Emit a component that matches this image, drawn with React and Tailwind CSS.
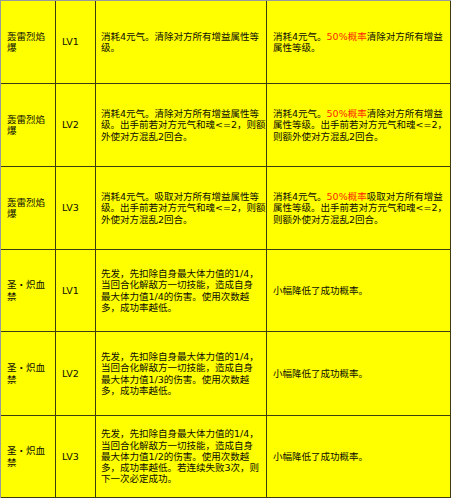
import React from "react";

const R = ({ children }) => <span className="text-[#ff2a00]">{children}</span>;

const rows = [
  {
    h: "h-[83px]",
    name: ["轰雷烈焰", "爆"],
    lv: "LV1",
    desc: ["消耗4元气。清除对方所有增益属性等", "级。"],
    eff: [<>消耗4元气。<R>50%概率</R>清除对方所有增益</>, "属性等级。"],
  },
  {
    h: "h-[83px]",
    name: ["轰雷烈焰", "爆"],
    lv: "LV2",
    desc: ["消耗4元气。清除对方所有增益属性等", "级。出手前若对方元气和魂<=2，则额", "外使对方混乱2回合。"],
    eff: [<>消耗4元气。<R>50%概率</R>清除对方所有增益</>, "属性等级。出手前若对方元气和魂<=2，", "则额外使对方混乱2回合。"],
  },
  {
    h: "h-[83px]",
    name: ["轰雷烈焰", "爆"],
    lv: "LV3",
    desc: ["消耗4元气。吸取对方所有增益属性等", "级。出手前若对方元气和魂<=2，则额", "外使对方混乱2回合。"],
    eff: [<>消耗4元气。<R>50%概率</R>吸取对方所有增益</>, "属性等级。出手前若对方元气和魂<=2，", "则额外使对方混乱2回合。"],
  },
  {
    h: "h-[82px]",
    name: ["圣・炽血", "禁"],
    lv: "LV1",
    desc: ["先发，先扣除自身最大体力值的1/4，", "当回合化解敌方一切技能，造成自身", "最大体力值1/4的伤害。使用次数越", "多，成功率越低。"],
    eff: ["小幅降低了成功概率。"],
  },
  {
    h: "h-[84px]",
    name: ["圣・炽血", "禁"],
    lv: "LV2",
    desc: ["先发，先扣除自身最大体力值的1/4，", "当回合化解敌方一切技能，造成自身", "最大体力值1/3的伤害。使用次数越", "多，成功率越低。"],
    eff: ["小幅降低了成功概率。"],
  },
  {
    h: "h-[82px]",
    name: ["圣・炽血", "禁"],
    lv: "LV3",
    desc: ["先发，先扣除自身最大体力值的1/4，", "当回合化解敌方一切技能，造成自身", "最大体力值1/2的伤害。使用次数越", "多，成功率越低。若连续失败3次，则", "下一次必定成功。"],
    eff: ["小幅降低了成功概率。"],
  },
];

const Lines = ({ lines }) => (
  <div className="whitespace-nowrap">
    {lines.map((l, i) => (
      <div key={i}>{l}</div>
    ))}
  </div>
);

export default function App() {
  return (
    <div className="bg-white w-[452px] h-[500px] overflow-hidden">
      <div
        className="w-[451px] bg-[#ffff00] border-l border-t border-[#9a9a9a] text-[9.5px] leading-[11.3px] text-[#0d0d00]"
        style={{ fontFamily: '"DejaVu Sans", "Noto Sans CJK SC", sans-serif' }}
      >
        {rows.map((r, i) => (
          <div key={i} className={`flex ${r.h}`}>
            <div className="w-[55px] shrink-0 flex items-center pl-[6px] border-r border-b border-[#3d3d10]">
              <Lines lines={r.name} />
            </div>
            <div className="w-[40px] shrink-0 flex items-center pl-[6px] border-r border-b border-[#3d3d10]">
              {r.lv}
            </div>
            <div className="w-[171px] shrink-0 flex items-center pl-[5px] border-r border-b border-[#3d3d10]">
              <Lines lines={r.desc} />
            </div>
            <div className="w-[184px] shrink-0 flex items-center pl-[6px] border-r border-b border-[#3d3d10]">
              <Lines lines={r.eff} />
            </div>
          </div>
        ))}
      </div>
    </div>
  );
}
